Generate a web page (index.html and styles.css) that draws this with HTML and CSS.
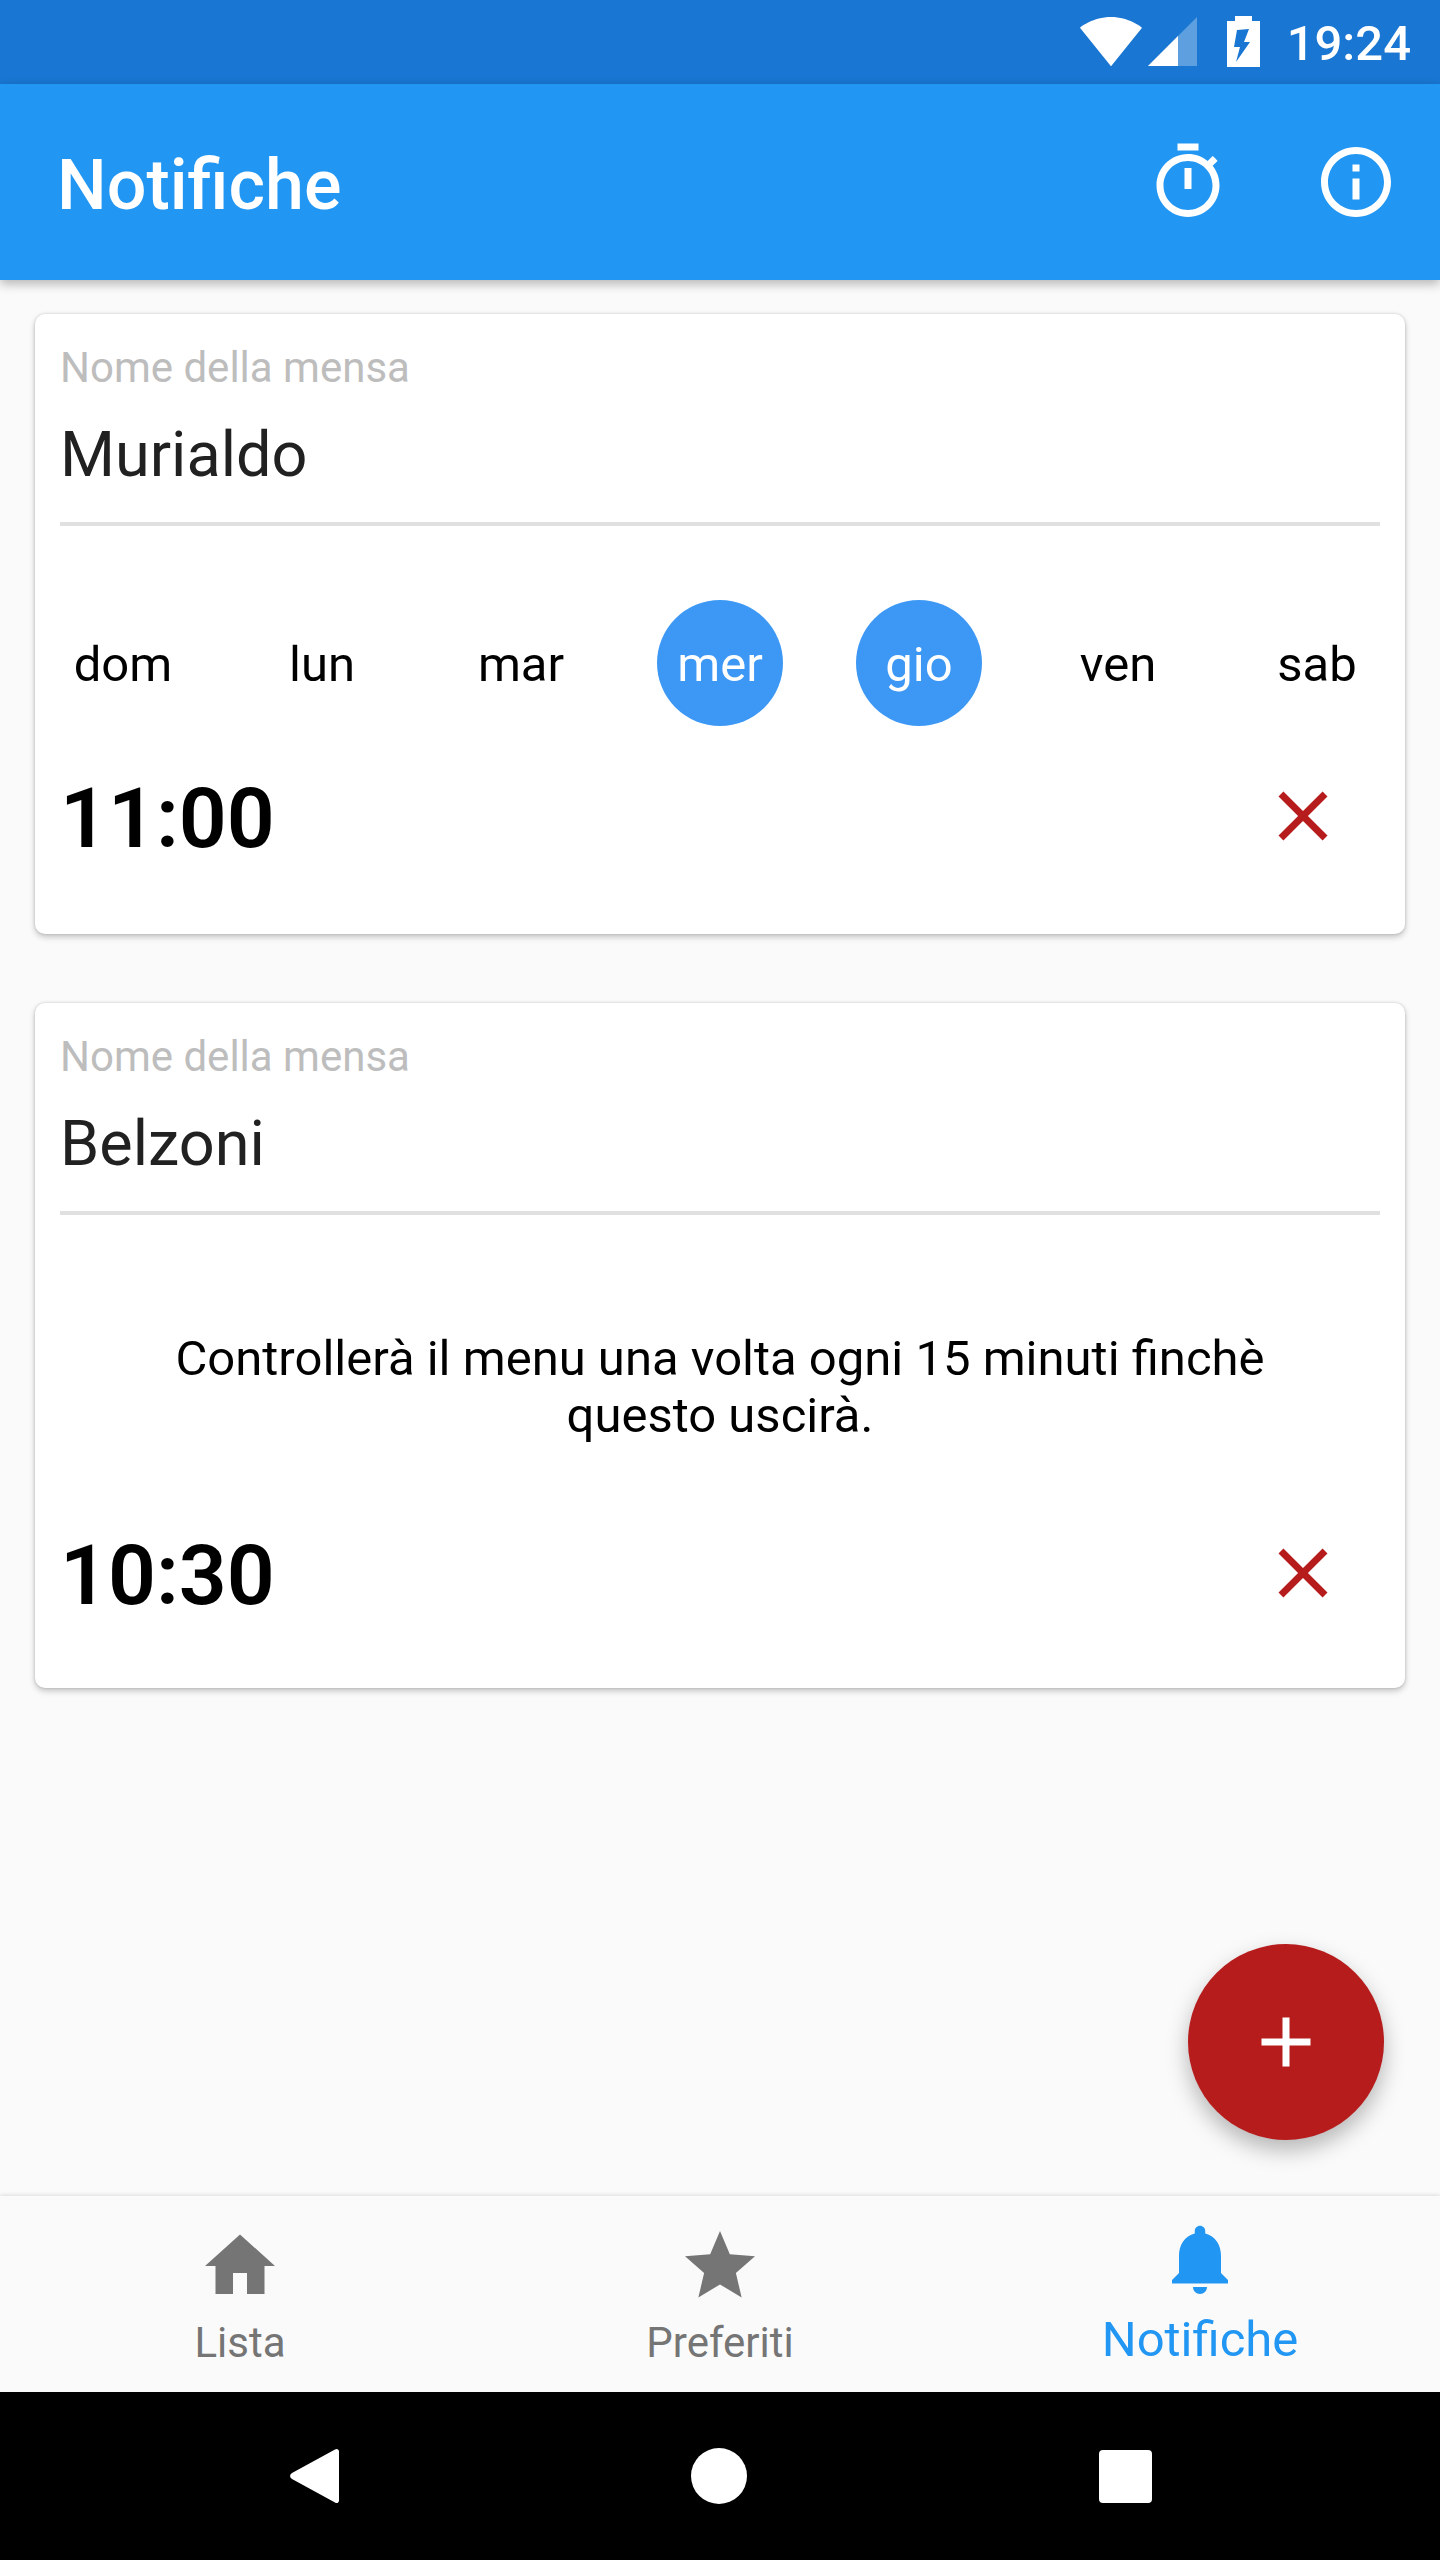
FILE: index.html
```html
<!DOCTYPE html>
<html lang="it">
<head>
  <meta charset="UTF-8">
  <meta name="viewport" content="width=device-width, initial-scale=1.0">
  <title>Notifiche</title>
  <link rel="stylesheet" href="styles.css">
</head>
<body>
  <div class="status-bar">
    <svg class="wifi-icon" viewBox="0 0 24 24"><path d="M12.01 21.49L23.64 7c-.45-.34-4.93-4-11.64-4C5.28 3 .81 6.66.36 7l11.63 14.49.01.01.01-.01z"/></svg>
    <svg class="signal-icon" viewBox="0 0 49 49"><path opacity="0.3" d="M0 49h49V0z"/><path d="M0 49h30V19z"/></svg>
    <svg class="battery-icon" viewBox="0 0 33 51"><path d="M8 0h17v5h8v46H0V5h8z"/><path class="bolt" d="M10 14l12-1-5 13h6L9 46l4-15H7z"/></svg>
    <span class="clock">19:24</span>
  </div>

  <div class="app-bar">
    <div class="app-title">Notifiche</div>
    <div class="icon-button"><svg class="icon" viewBox="0 0 24 24"><path d="M15 1H9v2h6V1zm-4 13h2V8h-2v6zm8.03-6.61l1.42-1.42c-.43-.51-.9-.99-1.41-1.41l-1.42 1.42C16.07 4.74 14.12 4 12 4c-4.97 0-9 4.03-9 9s4.02 9 9 9 9-4.03 9-9c0-2.12-.74-4.07-1.97-5.61zM12 20c-3.87 0-7-3.13-7-7s3.13-7 7-7 7 3.13 7 7-3.13 7-7 7z"/></svg></div>
    <div class="icon-button"><svg class="icon" viewBox="0 0 24 24"><path d="M11 17h2v-6h-2v6zm1-15C6.48 2 2 6.48 2 12s4.48 10 10 10 10-4.48 10-10S17.52 2 12 2zm0 18c-4.41 0-8-3.59-8-8s3.59-8 8-8 8 3.59 8 8-3.59 8-8 8zM11 9h2V7h-2v2z"/></svg></div>
  </div>

  <div class="content">
    <div class="card">
      <div class="field">
        <div class="field-label">Nome della mensa</div>
        <div class="field-value">Murialdo</div>
      </div>
      <div class="days">
        <div class="day">dom</div>
        <div class="day">lun</div>
        <div class="day">mar</div>
        <div class="day active">mer</div>
        <div class="day active">gio</div>
        <div class="day">ven</div>
        <div class="day">sab</div>
      </div>
      <div class="time-row">
        <div class="time">11:00</div>
        <svg class="icon close-icon" viewBox="0 0 24 24"><path d="M19 6.41L17.59 5 12 10.59 6.41 5 5 6.41 10.59 12 5 17.59 6.41 19 12 13.41 17.59 19 19 17.59 13.41 12z"/></svg>
      </div>
    </div>

    <div class="card">
      <div class="field">
        <div class="field-label">Nome della mensa</div>
        <div class="field-value">Belzoni</div>
      </div>
      <div class="hint">Controllerà il menu una volta ogni 15 minuti finchè<br>questo uscirà.</div>
      <div class="time-row hint-time">
        <div class="time">10:30</div>
        <svg class="icon close-icon" viewBox="0 0 24 24"><path d="M19 6.41L17.59 5 12 10.59 6.41 5 5 6.41 10.59 12 5 17.59 6.41 19 12 13.41 17.59 19 19 17.59 13.41 12z"/></svg>
      </div>
    </div>

    <div class="fab"><svg class="icon" viewBox="0 0 24 24"><path d="M19 13h-6v6h-2v-6H5v-2h6V5h2v6h6v2z"/></svg></div>
  </div>

  <div class="tabs">
    <div class="tab">
      <svg class="icon" viewBox="0 0 24 24"><path d="M10 20v-6h4v6h5v-8h3L12 3 2 12h3v8z"/></svg>
      <div class="tab-label">Lista</div>
    </div>
    <div class="tab">
      <svg class="icon" viewBox="0 0 24 24"><path d="M12 17.27L18.18 21l-1.64-7.03L22 9.24l-7.19-.61L12 2 9.19 8.63 2 9.24l5.46 4.73L5.82 21z"/></svg>
      <div class="tab-label">Preferiti</div>
    </div>
    <div class="tab active">
      <svg class="icon" viewBox="0 0 24 24"><path d="M12 22c1.1 0 2-.9 2-2h-4c0 1.1.89 2 2 2zm6-6v-5c0-3.07-1.64-5.64-4.5-6.32V4c0-.83-.67-1.5-1.5-1.5s-1.5.67-1.5 1.5v.68C7.63 5.36 6 7.92 6 11v5l-2 2v1h16v-1l-2-2z"/></svg>
      <div class="tab-label">Notifiche</div>
    </div>
  </div>

  <div class="system-nav">
    <svg class="nav-back" viewBox="0 0 49 56"><path d="M45 1.5c2-1.500 4 0 4 2v49c0 2-2 3.500-4 2L2 31c-2.500-1.500-2.500-4.500 0-6z"/></svg>
    <div class="nav-home"></div>
    <div class="nav-recent"></div>
  </div>
</body>
</html>
```

FILE: styles.css
```css
body {
  font-family: Roboto, "Liberation Sans", sans-serif;
  background-color: #FAFAFA;
  margin: 0;
  padding: 0;
  width: 1440px;
  height: 2560px;
  display: flex;
  flex-direction: column;
  overflow: hidden;
}
.icon {
  display: block;
  width: 84px;
  height: 84px;
  fill: currentColor;
}

/* status bar */
.status-bar {
  height: 84px;
  background-color: #1976D2;
  color: #fff;
  display: flex;
  align-items: flex-start;
  padding-right: 29px;
  justify-content: flex-end;
  flex-shrink: 0;
}
.status-bar svg {
  display: block;
  fill: #fff;
}
.wifi-icon {
  width: 64px;
  height: 64px;
  margin-top: 9px;
}
.signal-icon {
  width: 49px;
  height: 49px;
  margin-top: 17px;
  margin-left: 5px;
}
.battery-icon {
  width: 33px;
  height: 51px;
  margin-top: 16px;
  margin-left: 30px;
}
.status-bar .bolt {
  fill: #1976D2;
}
.clock {
  font-size: 49px;
  font-weight: 500;
  line-height: 58px;
  margin-top: 15px;
  margin-left: 27px;
  height: 58px;
}

/* app bar */
.app-bar {
  height: 196px;
  background-color: #2196F3;
  color: #fff;
  display: flex;
  align-items: center;
  padding-left: 57px;
  box-shadow: 0 4px 10px rgba(0, 0, 0, 0.28);
  position: relative;
  flex-shrink: 0;
}
.app-title {
  flex: 1;
  font-size: 70px;
  font-weight: 500;
  padding-top: 6px;
}
.icon-button {
  width: 168px;
  height: 168px;
  display: flex;
  align-items: center;
  justify-content: center;
}

/* cards */
.content {
  flex: 1;
  padding: 34px 35px 0;
  position: relative;
}
.card {
  background-color: #fff;
  border-radius: 10px;
  box-shadow: 0 3px 6px rgba(0, 0, 0, 0.22), 0 0 3px rgba(0, 0, 0, 0.16);
  padding: 29px 25px 0;
  margin-bottom: 69px;
}
.field {
  border-bottom: 4px solid #E0E0E0;
  padding-bottom: 30px;
}
.field-label {
  font-size: 42px;
  line-height: 50px;
  color: #BDBDBD;
}
.field-value {
  font-size: 63px;
  line-height: 74px;
  margin-top: 25px;
  color: #212121;
}
.days {
  display: flex;
  justify-content: space-between;
  margin-top: 74px;
}
.day {
  width: 126px;
  height: 126px;
  box-sizing: border-box;
  padding-top: 3px;
  border-radius: 50%;
  font-size: 49px;
  display: flex;
  align-items: center;
  justify-content: center;
  color: #000;
}
.day.active {
  background-color: #3D98F5;
  color: #fff;
}
.hint {
  font-size: 49px;
  line-height: 57px;
  text-align: center;
  color: #000;
  margin-top: 115px;
}
.time-row {
  display: flex;
  justify-content: space-between;
  align-items: flex-start;
  margin-top: 43px;
  padding-bottom: 65px;
}
.hint-time {
  margin-top: 82px;
  padding-bottom: 62px;
}
.time {
  font-size: 84px;
  font-weight: 600;
  line-height: 100px;
  color: #000;
}
.close-icon {
  color: #B71C1C;
  margin-top: 5px;
  margin-right: 35px;
}

/* floating button */
.fab {
  position: absolute;
  right: 56px;
  bottom: 56px;
  width: 196px;
  height: 196px;
  border-radius: 50%;
  background-color: #B71C1C;
  color: #fff;
  display: flex;
  align-items: center;
  justify-content: center;
  box-shadow: 0 10px 22px rgba(0, 0, 0, 0.28);
}

/* bottom tabs */
.tabs {
  height: 196px;
  background-color: #FAFAFA;
  display: flex;
  box-shadow: 0 -1px 4px rgba(0, 0, 0, 0.12);
  position: relative;
  flex-shrink: 0;
}
.tab {
  flex: 1;
  display: flex;
  flex-direction: column;
  align-items: center;
  padding-top: 28px;
  color: #757575;
}
.tab-label {
  font-size: 42px;
  line-height: 58px;
  margin-top: 6px;
}
.tab.active {
  padding-top: 21px;
  color: #2196F3;
}
.tab.active .tab-label {
  font-size: 49px;
  margin-top: 10px;
}

/* android navigation */
.system-nav {
  height: 168px;
  background-color: #000;
  display: flex;
  align-items: center;
  justify-content: center;
  padding-left: 2px;
  flex-shrink: 0;
}
.nav-back {
  display: block;
  width: 49px;
  height: 56px;
  fill: #fff;
  margin-right: 352px;
}
.nav-home {
  width: 56px;
  height: 56px;
  border-radius: 50%;
  background-color: #fff;
}
.nav-recent {
  width: 53px;
  height: 53px;
  border-radius: 4px;
  background-color: #fff;
  margin-left: 352px;
}
```
